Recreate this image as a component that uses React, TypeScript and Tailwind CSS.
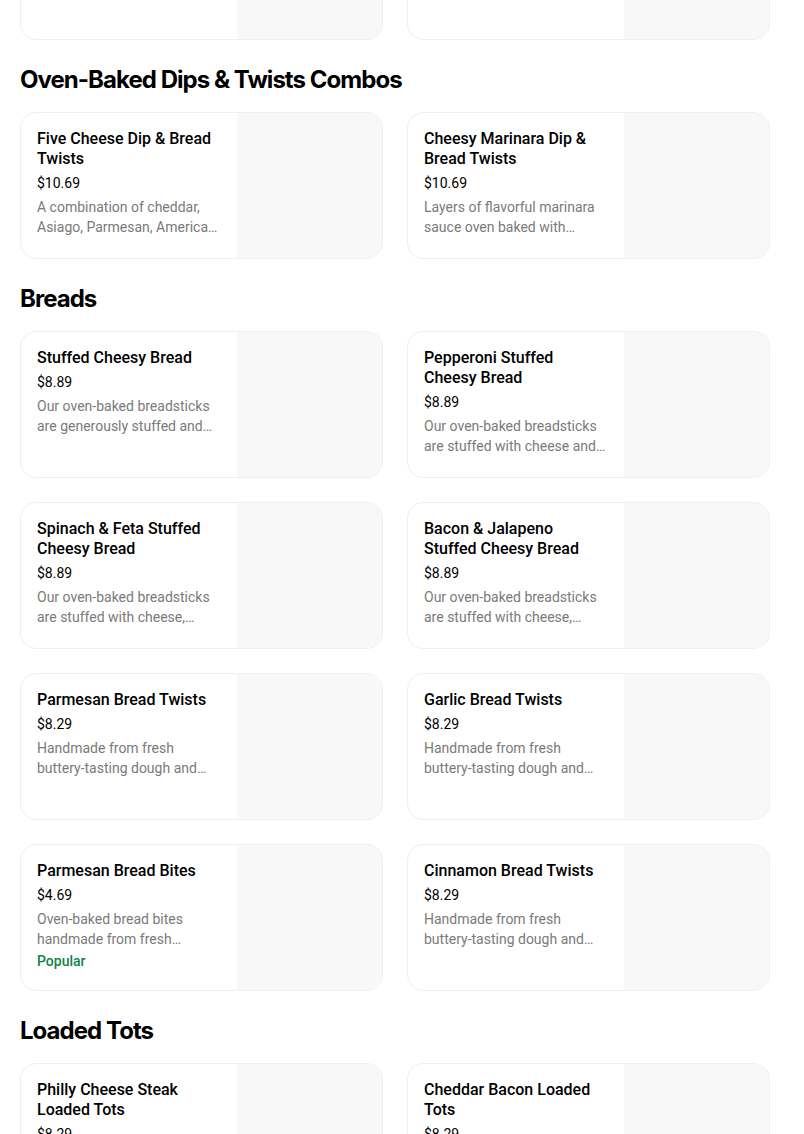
import React from 'react';

type Item = {
  name: string;
  price: string;
  desc?: string;
  popular?: boolean;
};

type Section = {
  title: string;
  items: Item[];
};

const sections: Section[] = [
  {
    title: 'Oven-Baked Dips & Twists Combos',
    items: [
      {
        name: 'Five Cheese Dip & Bread Twists',
        price: '$10.69',
        desc: 'A combination of cheddar, Asiago, Parmesan, American, and provolone cheeses baked into a dip.',
      },
      {
        name: 'Cheesy Marinara Dip & Bread Twists',
        price: '$10.69',
        desc: 'Layers of flavorful marinara sauce oven baked with cheese and served with bread twists.',
      },
    ],
  },
  {
    title: 'Breads',
    items: [
      {
        name: 'Stuffed Cheesy Bread',
        price: '$8.89',
        desc: 'Our oven-baked breadsticks are generously stuffed and covered with cheese.',
      },
      {
        name: 'Pepperoni Stuffed Cheesy Bread',
        price: '$8.89',
        desc: 'Our oven-baked breadsticks are stuffed with cheese and pepperoni.',
      },
      {
        name: 'Spinach & Feta Stuffed Cheesy Bread',
        price: '$8.89',
        desc: 'Our oven-baked breadsticks are stuffed with cheese, spinach and feta.',
      },
      {
        name: 'Bacon & Jalapeno Stuffed Cheesy Bread',
        price: '$8.89',
        desc: 'Our oven-baked breadsticks are stuffed with cheese, bacon and jalapenos.',
      },
      {
        name: 'Parmesan Bread Twists',
        price: '$8.29',
        desc: 'Handmade from fresh buttery-tasting dough and baked to a golden brown.',
      },
      {
        name: 'Garlic Bread Twists',
        price: '$8.29',
        desc: 'Handmade from fresh buttery-tasting dough and baked to a golden brown.',
      },
      {
        name: 'Parmesan Bread Bites',
        price: '$4.69',
        desc: 'Oven-baked bread bites handmade from fresh buttery-tasting dough.',
        popular: true,
      },
      {
        name: 'Cinnamon Bread Twists',
        price: '$8.29',
        desc: 'Handmade from fresh buttery-tasting dough and baked to a golden brown.',
      },
    ],
  },
  {
    title: 'Loaded Tots',
    items: [
      {
        name: 'Philly Cheese Steak Loaded Tots',
        price: '$8.29',
        desc: 'Crispy tots topped with steak, onions, peppers and cheese.',
      },
      {
        name: 'Cheddar Bacon Loaded Tots',
        price: '$8.29',
        desc: 'Crispy tots topped with cheddar and bacon.',
      },
    ],
  },
];

function ItemCard({ item }: { item?: Item }) {
  return (
    <div className="flex h-[147px] overflow-hidden rounded-2xl border border-[#efefef] bg-white">
      <div className="flex-1 min-w-0 px-4 pt-4 font-['Roboto',sans-serif]">
        {item && (
          <>
            <p className="text-base leading-5 font-medium text-black">{item.name}</p>
            <p className="mt-1 text-sm leading-5 text-black">{item.price}</p>
            {item.desc && (
              <p className="mt-1 text-sm leading-5 text-[#7a7a7a] line-clamp-2">{item.desc}</p>
            )}
            {item.popular && (
              <p className="mt-0.5 text-sm leading-5 font-medium text-[#0e8345]">Popular</p>
            )}
          </>
        )}
      </div>
      <div className="w-[145px] shrink-0 bg-[#f8f8f8]" />
    </div>
  );
}

export default function App() {
  return (
    <div
      className="h-[1134px] overflow-hidden bg-white pl-5 pr-[34px]"
      style={{ fontFamily: 'Inter, "Noto Sans", sans-serif' }}
    >
      {/* row scrolled mostly out of view */}
      <div className="-mt-[107px] grid grid-cols-2 gap-6">
        <ItemCard />
        <ItemCard />
      </div>

      {sections.map((section) => (
        <div key={section.title}>
          <h2 className="mt-6 mb-4 text-2xl leading-8 font-bold tracking-[-0.04em] text-black">
            {section.title}
          </h2>
          <div className="grid grid-cols-2 gap-6">
            {section.items.map((item) => (
              <ItemCard key={item.name} item={item} />
            ))}
          </div>
        </div>
      ))}
    </div>
  );
}
